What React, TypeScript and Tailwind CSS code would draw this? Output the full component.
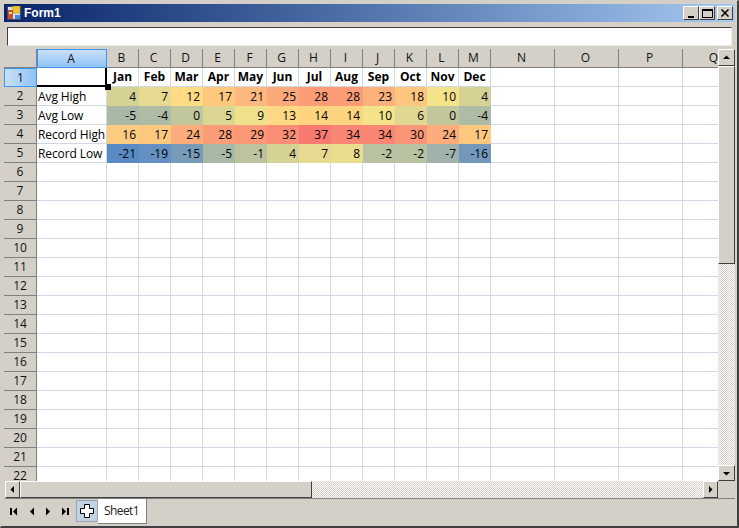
import { Fragment, ReactNode } from "react"

const colHeads = [
  { name: "A", selected: true },
  ..."BCDEFGHIJKLMNOPQ".split("").map((name) => ({ name, selected: false })),
]

const months = ["Jan", "Feb", "Mar", "Apr", "May", "Jun", "Jul", "Aug", "Sep", "Oct", "Nov", "Dec"]

const rows: [string, number[]][] = [
  ["Avg High", [4, 7, 12, 17, 21, 25, 28, 28, 23, 18, 10, 4]],
  ["Avg Low", [-5, -4, 0, 5, 9, 13, 14, 14, 10, 6, 0, -4]],
  ["Record High", [16, 17, 24, 28, 29, 32, 37, 34, 34, 30, 24, 17]],
  ["Record Low", [-21, -19, -15, -5, -1, 4, 7, 8, -2, -2, -7, -16]],
]

// three colour scale, blue / yellow / red, midpoint at the median
function heat(v: number) {
  const low = [90, 138, 198]
  const midLow = [244, 227, 138]
  const midHigh = [255, 228, 132]
  const high = [250, 122, 114]
  const t = v <= 10 ? (v + 21) / 31 : (v - 10) / 27
  const a = v <= 10 ? low : midHigh
  const b = v <= 10 ? midLow : high
  return "rgb(" + a.map((c, i) => Math.round(c + (b[i] - c) * t)).join(",") + ")"
}

const cell = "h-[19px] border-r border-b border-[#d0d7e5] px-[2px] text-[12px] leading-[18px] text-black whitespace-nowrap overflow-hidden"
const bevel = "bg-[#d4d0c8] border border-t-white border-l-white border-r-[#404040] border-b-[#404040]"
const track = "bg-[repeating-conic-gradient(#d4d0c8_0_25%,#ffffff_0_50%)] bg-[length:2px_2px]"

function RowHead({ n, selected }: { n: number; selected?: boolean }) {
  return (
    <div
      className={
        selected
          ? "h-[19px] flex items-center justify-center text-[12px] text-[#111] border border-[#3d95ee] bg-gradient-to-r from-[#c9e0f8] to-[#8fc2f5]"
          : "h-[19px] flex items-center justify-center text-[12px] text-[#111] bg-[#d4d0c8] border-r border-b border-[#808080]"
      }
    >
      {n}
    </div>
  )
}

function Arrow({ points }: { points: string }) {
  return (
    <svg width="9" height="9" viewBox="0 0 9 9">
      <polygon points={points} fill="#000" />
    </svg>
  )
}

function ScrollBtn({ className, children }: { className: string; children: ReactNode }) {
  return <div className={className + " " + bevel + " flex items-center justify-center shrink-0"}>{children}</div>
}

function WinBtn({ children }: { children: ReactNode }) {
  return <div className={"w-[16px] h-[14px] flex items-center justify-center " + bevel}>{children}</div>
}

function NavIcon({ children }: { children: ReactNode }) {
  return (
    <svg width="9" height="9" viewBox="0 0 9 9" className="w-[9px] h-[9px]">
      {children}
    </svg>
  )
}

export default function App() {
  return (
    <div className="w-[739px] h-[528px] flex flex-col bg-[#d4d0c8] border-r-2 border-b-2 border-r-[#404040] border-b-[#404040] border-t border-l border-t-[#d4d0c8] border-l-[#d4d0c8] overflow-hidden font-['Open_Sans',sans-serif]">
      {/* title bar */}
      <div className="mt-[3px] ml-[3px] mr-[2px] h-[18px] shrink-0 flex items-center pl-[3px] pr-[2px] bg-gradient-to-r from-[#0a246a] to-[#a6caf0]">
        <svg width="14" height="14" viewBox="0 0 14 14" className="shrink-0">
          <rect x="0.5" y="0.5" width="13" height="13" fill="#d9dee6" stroke="#3c4a66" />
          <rect x="1" y="4" width="5" height="9" fill="#c8502a" />
          <rect x="2" y="6" width="3" height="2" fill="#f0e0a0" />
          <rect x="6" y="0" width="7" height="7" fill="#f4c430" stroke="#a67c10" strokeWidth="0.5" />
          <rect x="8" y="9" width="5" height="4" fill="#4a86d8" />
        </svg>
        <span className="ml-[3px] text-[12px] leading-none font-bold text-white font-['Liberation_Sans',sans-serif]">Form1</span>
        <div className="ml-auto flex items-center">
          <WinBtn>
            <div className="mt-[7px] w-[6px] h-[2px] bg-black" />
          </WinBtn>
          <WinBtn>
            <div className="w-[11px] h-[9px] border border-black border-t-2" />
          </WinBtn>
          <div className="w-[2px]" />
          <WinBtn>
            <svg width="8" height="8" viewBox="0 0 8 8">
              <path d="M0.5 0.5 L7.5 7.5 M7.5 0.5 L0.5 7.5" stroke="#000" strokeWidth="1.5" />
            </svg>
          </WinBtn>
        </div>
      </div>

      {/* formula box */}
      <div className="mt-[5px] ml-[6px] mr-[5px] h-[19px] shrink-0 bg-white border border-t-[#404040] border-l-[#404040] border-r-[#eeeeee] border-b-[#eeeeee]" />

      {/* sheet + vertical scrollbar */}
      <div className="mt-[3px] ml-[3px] mr-[2px] h-[432px] shrink-0 flex">
        <div className="w-[714px] h-[432px] overflow-hidden bg-white">
          <div className="w-[743px] grid grid-cols-[33px_70px_repeat(12,32px)_repeat(4,64px)] grid-rows-[19px_repeat(22,19px)]">
            <div className="bg-[#d4d0c8] border-r border-b border-[#808080]" />
            {colHeads.map((c) => (
              <div
                key={c.name}
                className={
                  c.selected
                    ? "flex items-center justify-center pr-[2px] text-[12px] text-[#111] border border-[#3d95ee] bg-gradient-to-b from-[#c9e0f8] to-[#8fc2f5]"
                    : "flex items-center justify-center pr-[2px] text-[12px] text-[#111] bg-[#d4d0c8] border-r border-b border-[#808080]"
                }
              >
                {c.name}
              </div>
            ))}

            <RowHead n={1} selected />
            <div className="relative h-[19px] border-r-2 border-b-2 border-black">
              <div className="absolute right-[-6px] bottom-[-5px] w-[6px] h-[6px] bg-black" />
            </div>
            {months.map((m) => (
              <div key={m} className={cell + " text-center font-bold"}>
                {m}
              </div>
            ))}
            {Array.from({ length: 4 }).map((_, i) => (
              <div key={i} className={cell} />
            ))}

            {rows.map(([label, values], r) => (
              <Fragment key={label}>
                <RowHead n={r + 2} />
                <div className={cell + " pt-[1px] pl-[1px] tracking-[-0.1px]"}>{label}</div>
                {values.map((v, i) => (
                  <div key={i} className={cell + " pt-[1px] text-right border-transparent"} style={{ backgroundColor: heat(v) }}>
                    {v}
                  </div>
                ))}
                {Array.from({ length: 4 }).map((_, i) => (
                  <div key={"e" + i} className={cell} />
                ))}
              </Fragment>
            ))}

            {Array.from({ length: 17 }).map((_, r) => (
              <Fragment key={r}>
                <RowHead n={r + 6} />
                {Array.from({ length: 17 }).map((_, i) => (
                  <div key={i} className={cell} />
                ))}
              </Fragment>
            ))}
          </div>
        </div>

        <div className={"w-[17px] flex flex-col " + track}>
          <ScrollBtn className="w-[17px] h-[17px]">
            <Arrow points="1,6 8,6 4.5,2.5" />
          </ScrollBtn>
          <div className={"w-[17px] h-[198px] shrink-0 " + bevel} />
          <div className="flex-1" />
          <ScrollBtn className="w-[17px] h-[16px]">
            <Arrow points="1,3 8,3 4.5,6.5" />
          </ScrollBtn>
        </div>
      </div>

      {/* horizontal scrollbar */}
      <div className="ml-[4px] mr-[2px] h-[18px] shrink-0 flex border-b border-[#808080]">
        <div className={"w-[713px] h-[17px] flex " + track}>
          <ScrollBtn className="w-[15px] h-[17px]">
            <Arrow points="6,1 6,8 2.5,4.5" />
          </ScrollBtn>
          <div className={"w-[292px] h-[17px] shrink-0 " + bevel} />
          <div className="flex-1" />
          <ScrollBtn className="w-[15px] h-[17px]">
            <Arrow points="3,1 3,8 6.5,4.5" />
          </ScrollBtn>
        </div>
      </div>

      {/* sheet tabs */}
      <div className="ml-[9px] h-[26px] flex items-start">
        <div className="mt-[8px] flex items-center gap-[8px] w-[66px]">
          <NavIcon>
            <rect x="0" y="1" width="2" height="7" fill="#000" />
            <polygon points="7,0.5 7,8.5 3,4.5" fill="#000" />
          </NavIcon>
          <NavIcon>
            <polygon points="7,0.5 7,8.5 3,4.5" fill="#000" />
          </NavIcon>
          <NavIcon>
            <polygon points="2,0.5 2,8.5 6,4.5" fill="#000" />
          </NavIcon>
          <NavIcon>
            <polygon points="1,0.5 1,8.5 5,4.5" fill="#000" />
            <rect x="6" y="1" width="2" height="7" fill="#000" />
          </NavIcon>
        </div>
        <div className="mt-[1px] w-[22px] h-[22px] flex items-center justify-center bg-[#c1d2e3] border border-[#9aa5b3]">
          <svg width="16" height="16" viewBox="0 0 16 16">
            <path d="M5.5 1.5h5v4h4v5h-4v4h-5v-4h-4v-5h4z" fill="#fff" stroke="#000" />
          </svg>
        </div>
        <div className="h-[25px] w-[49px] pl-[6px] bg-white border-r border-b border-[#808080] text-[12px] leading-[24px] tracking-[-0.6px] text-[#222]">
          Sheet1
        </div>
      </div>
    </div>
  )
}
